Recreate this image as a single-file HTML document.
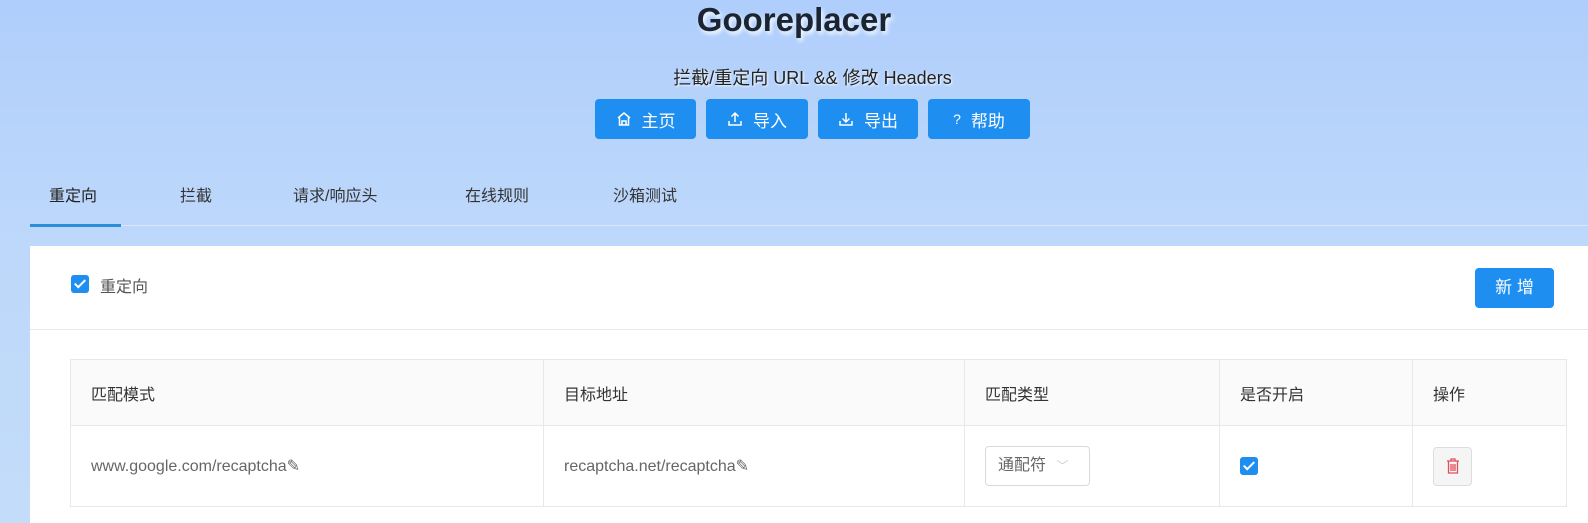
<!DOCTYPE html>
<html><head><meta charset="utf-8"><style>
*{box-sizing:border-box;margin:0;padding:0}
body{width:1588px;height:523px;overflow:hidden;font-family:"Liberation Sans","Noto Sans CJK SC",sans-serif;background:linear-gradient(180deg,#afcefb 0%,#bcd7fb 40%,#c3dcf9 100%);position:relative;color:#333}
.title{position:absolute;top:0;left:0;width:1588px;text-align:center;font-size:33px;font-weight:bold;color:#1b2433;text-shadow:2px 3px 4px rgba(255,255,255,.9);line-height:40px}
.sub{position:absolute;top:64px;left:0;width:1625px;text-align:center;font-size:18px;color:#222;text-shadow:1px 1px 2px #fff}
.btn{position:absolute;top:99px;height:40px;background:#1e8ff1;border-radius:4px;color:#fff;font-size:17px;display:flex;align-items:center;justify-content:center;gap:10px}
.tabs{position:absolute;top:180px;left:30px;right:0;height:46px;border-bottom:1px solid #d8e6f5}
.tab{position:absolute;top:2px;font-size:16px;color:#333}
.ink{position:absolute;left:30px;top:224px;width:91px;height:3px;background:#2a8fd6}
.card{position:absolute;left:30px;top:246px;right:0;bottom:0;background:#fff}
.cb{position:absolute;width:18px;height:18px;background:#1e8ff1;border-radius:3px}
.cb:after{content:"";position:absolute;left:6px;top:2px;width:4px;height:9px;border:solid #fff;border-width:0 2.5px 2.5px 0;transform:rotate(45deg)}
table{position:absolute;left:70px;top:359px;width:1497px;border-collapse:collapse;font-size:16px}
td,th{border:1px solid #e8e8e8;text-align:left;font-weight:normal;padding-left:20px}
th{background:#fafafa;height:66px;color:#333}
td{height:81px;color:#666}
</style></head><body>
<div class="title">Gooreplacer</div>
<div class="sub">拦截/重定向 URL &amp;&amp; 修改 Headers</div>
<div class="btn" style="left:595px;width:101px"><svg width="16" height="16" viewBox="0 0 16 16" fill="none" stroke="#fff" stroke-width="1.5"><path d="M2 7L8 2l6 5M3.5 6v8h9V6M6 14v-4h4v4"/></svg>主页</div>
<div class="btn" style="left:706px;width:102px"><svg width="16" height="16" viewBox="0 0 16 16" fill="none" stroke="#fff" stroke-width="1.5"><path d="M8 11V2M4.5 5.5L8 2l3.5 3.5M2 10v4h12v-4"/></svg>导入</div>
<div class="btn" style="left:818px;width:100px"><svg width="16" height="16" viewBox="0 0 16 16" fill="none" stroke="#fff" stroke-width="1.5"><path d="M8 2v9M4.5 7.5L8 11l3.5-3.5M2 10v4h12v-4"/></svg>导出</div>
<div class="btn" style="left:928px;width:102px"><span style="font-size:14px">?</span>帮助</div>
<div class="tabs">
<span class="tab" style="left:19px;color:#222">重定向</span>
<span class="tab" style="left:150px">拦截</span>
<span class="tab" style="left:263px">请求/响应头</span>
<span class="tab" style="left:435px">在线规则</span>
<span class="tab" style="left:583px">沙箱测试</span>
</div>
<div class="ink"></div>
<div class="card">
<div class="cb" style="left:41px;top:29px"></div>
<span style="position:absolute;left:70px;top:27px;font-size:16px;color:#555">重定向</span>
<div style="position:absolute;left:1445px;top:22px;width:79px;height:40px;background:#1e8ff1;border-radius:4px;color:#fff;font-size:17px;text-align:center;line-height:40px">新 增</div>
<div style="position:absolute;left:0;right:0;top:83px;border-top:1px solid #e8e8e8"></div>
</div>
<table>
<tr><th style="width:473px">匹配模式</th><th style="width:421px">目标地址</th><th style="width:255px">匹配类型</th><th style="width:193px">是否开启</th><th>操作</th></tr>
<tr><td>www.google.com/recaptcha✎</td><td>recaptcha.net/recaptcha✎</td>
<td><div style="width:105px;height:40px;border:1px solid #d9d9d9;border-radius:4px;padding-left:12px;line-height:38px;color:#666">通配符 <span style="color:#ccc;font-size:12px;margin-left:6px">﹀</span></div></td>
<td><div class="cb" style="position:relative"></div></td>
<td><div style="width:39px;height:39px;border:1px solid #ddd;border-radius:4px;background:#f5f5f5;display:flex;align-items:center;justify-content:center"><svg width="14" height="16" viewBox="0 0 14 16" fill="none" stroke="#e0505a" stroke-width="1.3"><path d="M1 3h12M5 3V1h4v2M2.5 3v12h9V3M5 6v7M7 6v7M9 6v7"/></svg></div></td></tr>
</table>
</body></html>
